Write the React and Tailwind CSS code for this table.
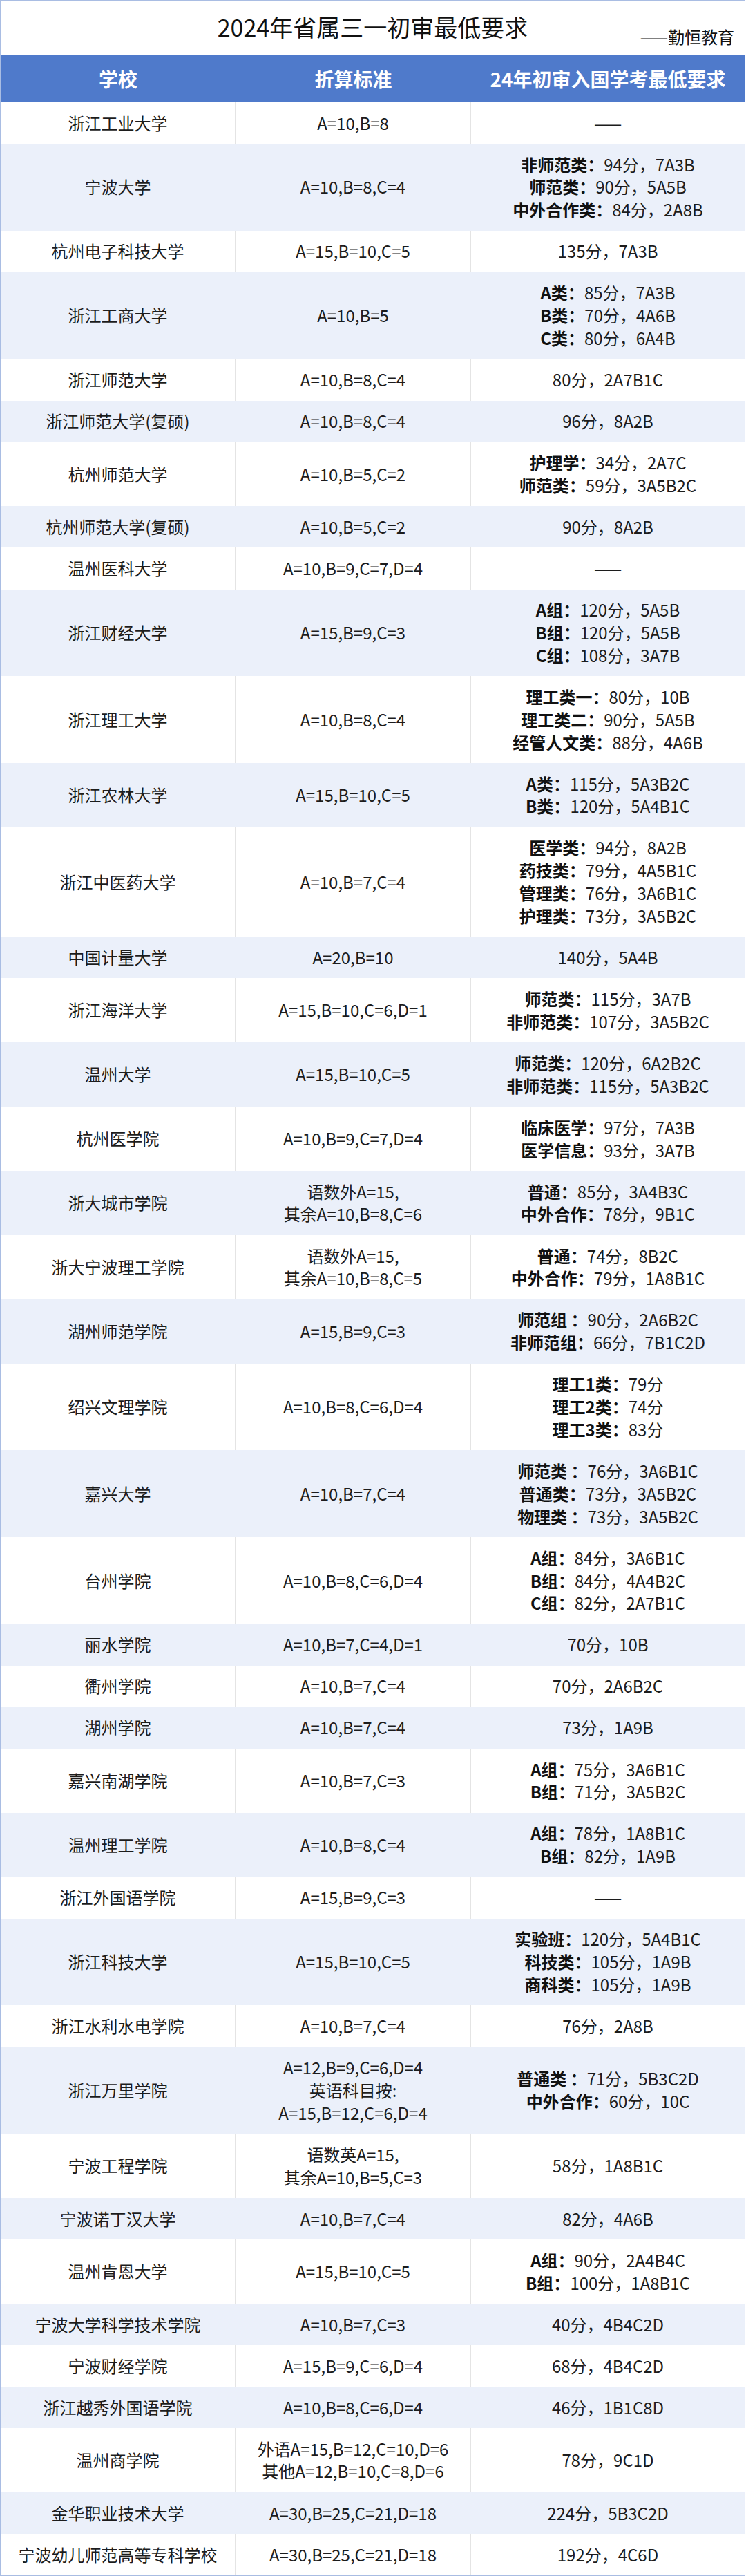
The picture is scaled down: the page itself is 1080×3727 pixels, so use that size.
import React from "react";

const D = "dash";
const rows = [
  ["浙江工业大学", ["A=10,B=8"], D],
  ["宁波大学", ["A=10,B=8,C=4"], [["非师范类：", "94分，7A3B"], ["师范类：", "90分，5A5B"], ["中外合作类：", "84分，2A8B"]]],
  ["杭州电子科技大学", ["A=15,B=10,C=5"], [["", "135分，7A3B"]]],
  ["浙江工商大学", ["A=10,B=5"], [["A类：", "85分，7A3B"], ["B类：", "70分，4A6B"], ["C类：", "80分，6A4B"]]],
  ["浙江师范大学", ["A=10,B=8,C=4"], [["", "80分，2A7B1C"]]],
  ["浙江师范大学(复硕)", ["A=10,B=8,C=4"], [["", "96分，8A2B"]]],
  ["杭州师范大学", ["A=10,B=5,C=2"], [["护理学：", "34分，2A7C"], ["师范类：", "59分，3A5B2C"]]],
  ["杭州师范大学(复硕)", ["A=10,B=5,C=2"], [["", "90分，8A2B"]]],
  ["温州医科大学", ["A=10,B=9,C=7,D=4"], D],
  ["浙江财经大学", ["A=15,B=9,C=3"], [["A组：", "120分，5A5B"], ["B组：", "120分，5A5B"], ["C组：", "108分，3A7B"]]],
  ["浙江理工大学", ["A=10,B=8,C=4"], [["理工类一：", "80分，10B"], ["理工类二：", "90分，5A5B"], ["经管人文类：", "88分，4A6B"]]],
  ["浙江农林大学", ["A=15,B=10,C=5"], [["A类：", "115分，5A3B2C"], ["B类：", "120分，5A4B1C"]]],
  ["浙江中医药大学", ["A=10,B=7,C=4"], [["医学类：", "94分，8A2B"], ["药技类：", "79分，4A5B1C"], ["管理类：", "76分，3A6B1C"], ["护理类：", "73分，3A5B2C"]]],
  ["中国计量大学", ["A=20,B=10"], [["", "140分，5A4B"]]],
  ["浙江海洋大学", ["A=15,B=10,C=6,D=1"], [["师范类：", "115分，3A7B"], ["非师范类：", "107分，3A5B2C"]]],
  ["温州大学", ["A=15,B=10,C=5"], [["师范类：", "120分，6A2B2C"], ["非师范类：", "115分，5A3B2C"]]],
  ["杭州医学院", ["A=10,B=9,C=7,D=4"], [["临床医学：", "97分，7A3B"], ["医学信息：", "93分，3A7B"]]],
  ["浙大城市学院", ["语数外A=15,", "其余A=10,B=8,C=6"], [["普通：", "85分，3A4B3C"], ["中外合作：", "78分，9B1C"]]],
  ["浙大宁波理工学院", ["语数外A=15,", "其余A=10,B=8,C=5"], [["普通：", "74分，8B2C"], ["中外合作：", "79分，1A8B1C"]]],
  ["湖州师范学院", ["A=15,B=9,C=3"], [["师范组 ：", "90分，2A6B2C"], ["非师范组：", "66分，7B1C2D"]]],
  ["绍兴文理学院", ["A=10,B=8,C=6,D=4"], [["理工1类：", "79分"], ["理工2类：", "74分"], ["理工3类：", "83分"]]],
  ["嘉兴大学", ["A=10,B=7,C=4"], [["师范类 ：", "76分，3A6B1C"], ["普通类：", "73分，3A5B2C"], ["物理类 ：", "73分，3A5B2C"]]],
  ["台州学院", ["A=10,B=8,C=6,D=4"], [["A组：", "84分，3A6B1C"], ["B组：", "84分，4A4B2C"], ["C组：", "82分，2A7B1C"]]],
  ["丽水学院", ["A=10,B=7,C=4,D=1"], [["", "70分，10B"]]],
  ["衢州学院", ["A=10,B=7,C=4"], [["", "70分，2A6B2C"]]],
  ["湖州学院", ["A=10,B=7,C=4"], [["", "73分，1A9B"]]],
  ["嘉兴南湖学院", ["A=10,B=7,C=3"], [["A组：", "75分，3A6B1C"], ["B组：", "71分，3A5B2C"]]],
  ["温州理工学院", ["A=10,B=8,C=4"], [["A组：", "78分，1A8B1C"], ["B组：", "82分，1A9B"]]],
  ["浙江外国语学院", ["A=15,B=9,C=3"], D],
  ["浙江科技大学", ["A=15,B=10,C=5"], [["实验班：", "120分，5A4B1C"], ["科技类：", "105分，1A9B"], ["商科类：", "105分，1A9B"]]],
  ["浙江水利水电学院", ["A=10,B=7,C=4"], [["", "76分，2A8B"]]],
  ["浙江万里学院", ["A=12,B=9,C=6,D=4", "英语科目按:", "A=15,B=12,C=6,D=4"], [["普通类 ：", "71分，5B3C2D"], ["中外合作：", "60分，10C"]]],
  ["宁波工程学院", ["语数英A=15,", "其余A=10,B=5,C=3"], [["", "58分，1A8B1C"]]],
  ["宁波诺丁汉大学", ["A=10,B=7,C=4"], [["", "82分，4A6B"]]],
  ["温州肯恩大学", ["A=15,B=10,C=5"], [["A组：", "90分，2A4B4C"], ["B组：", "100分，1A8B1C"]]],
  ["宁波大学科学技术学院", ["A=10,B=7,C=3"], [["", "40分，4B4C2D"]]],
  ["宁波财经学院", ["A=15,B=9,C=6,D=4"], [["", "68分，4B4C2D"]]],
  ["浙江越秀外国语学院", ["A=10,B=8,C=6,D=4"], [["", "46分，1B1C8D"]]],
  ["温州商学院", ["外语A=15,B=12,C=10,D=6", "其他A=12,B=10,C=8,D=6"], [["", "78分，9C1D"]]],
  ["金华职业技术大学", ["A=30,B=25,C=21,D=18"], [["", "224分，5B3C2D"]]],
  ["宁波幼儿师范高等专科学校", ["A=30,B=25,C=21,D=18"], [["", "192分，4C6D"]]],
];

function Cell({ children, border, white }) {
  return (
    <div
      className={
        "flex flex-col items-center justify-center text-center py-[13.6px] leading-[32.85px] " +
        (border ? "border-r " : "") +
        (white ? "border-[#e4e4e4]" : "border-transparent")
      }
    >
      {children}
    </div>
  );
}

export default function App() {
  return (
    <div className="w-[1080px] bg-white text-[#1c1c1c] font-['Noto_Sans_CJK_SC','Noto_Sans',sans-serif]">
      <div className="w-[1079px] border-l border-r border-t border-b border-[#a9bde3]">
        <div className="h-[78px] grid grid-cols-[1fr_auto_1fr] bg-white">
          <div></div>
          <div className="flex items-center text-[34px] leading-none text-[#111] pb-[2px]">
            2024年省属三一初审最低要求
          </div>
          <div className="flex items-end justify-end pr-[15px] pb-[14px] text-[24px] leading-none text-[#111]">
            ——勤恒教育
          </div>
        </div>
        <div className="h-[69px] grid grid-cols-[340px_341px_1fr] bg-[#4f7acb] text-white font-bold text-[28px] border-t border-[#a9bde3]">
          <div className="flex items-center justify-center">学校</div>
          <div className="flex items-center justify-center">折算标准</div>
          <div className="flex items-center justify-center">24年初审入国学考最低要求</div>
        </div>
        {rows.map((r, i) => {
          const white = i % 2 === 0;
          return (
            <div
              key={i}
              className={
                "grid grid-cols-[340px_341px_1fr] text-[24px] " +
                (white ? "bg-white" : "bg-[#ebf0fa]")
              }
            >
              <Cell border white={white}>
                <div>{r[0]}</div>
              </Cell>
              <Cell border white={white}>
                {r[1].map((t, j) => (
                  <div key={j}>{t}</div>
                ))}
              </Cell>
              <Cell white={white}>
                {r[2] === D ? (
                  <div>——</div>
                ) : (
                  r[2].map((l, j) => (
                    <div key={j} className="whitespace-nowrap">
                      {l[0] ? <span className="font-bold text-[#111]">{l[0]}</span> : null}
                      <span>{l[1]}</span>
                    </div>
                  ))
                )}
              </Cell>
            </div>
          );
        })}
      </div>
    </div>
  );
}
